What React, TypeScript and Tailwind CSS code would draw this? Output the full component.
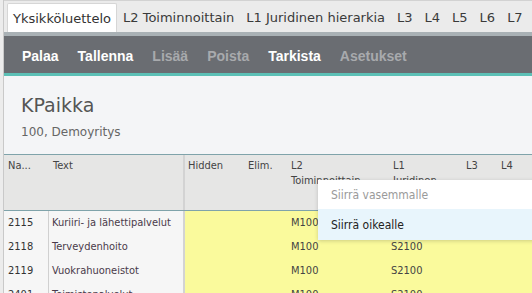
const tabs = ['L2 Toiminnoittain', 'L1 Juridinen hierarkia', 'L3', 'L4', 'L5', 'L6', 'L7'];

const actions = [
  { label: 'Palaa', enabled: true },
  { label: 'Tallenna', enabled: true },
  { label: 'Lisää', enabled: false },
  { label: 'Poista', enabled: false },
  { label: 'Tarkista', enabled: true },
  { label: 'Asetukset', enabled: false },
];

const rows = [
  { no: '2115', text: 'Kuriiri- ja lähettipalvelut', l2: 'M100', l1: 'S2100' },
  { no: '2118', text: 'Terveydenhoito', l2: 'M100', l1: 'S2100' },
  { no: '2119', text: 'Vuokrahuoneistot', l2: 'M100', l1: 'S2100' },
  { no: '2401', text: 'Toimistopalvelut', l2: 'M100', l1: 'S2100' },
];

export default function App() {
  return (
    <div className="relative flex h-[293px] w-[532px] overflow-hidden bg-white font-['Verdana','DejaVu_Sans',sans-serif] text-[#333]">
      {/* Left edge */}
      <div className="w-[4px] shrink-0 border-r border-[#c9c9c9] bg-[#ececec]" />

      <div className="flex min-w-0 flex-1 flex-col">
        {/* Tabs */}
        <div className="flex h-[32px] shrink-0 items-end border-t border-[#d2d2d2] bg-[#ebebeb] pl-[3px] text-[13px] whitespace-nowrap">
          <div className="flex h-[29px] items-center rounded-t-[2px] border border-b-0 border-[#d6d6d6] bg-white px-[5px] pt-[1px] text-[#333]">
            Yksikköluettelo
          </div>
          {tabs.map((t) => (
            <div key={t} className="flex h-[29px] items-center px-[6px] pt-[1px] text-[#3a3a3a]">
              {t}
            </div>
          ))}
        </div>
        <div className="h-[4px] shrink-0 bg-[#a9b1b5]" />

        {/* Toolbar */}
        <div className="flex h-[40px] shrink-0 items-center gap-[19px] border-b-[3px] border-[#5cc0b6] bg-[#6a6d72] pt-[3px] pl-[18px] font-['Liberation_Sans',sans-serif] text-[14px] font-bold">
          {actions.map((a) => (
            <span key={a.label} className={a.enabled ? 'text-white' : 'text-[#a8aaad]'}>
              {a.label}
            </span>
          ))}
        </div>

        {/* Page header */}
        <div className="h-[78px] shrink-0 bg-[#f4f5f7] px-[17px] pt-[16px]">
          <div className="text-[19px] leading-[26px] text-[#555]">KPaikka</div>
          <div className="mt-[5px] text-[12px] text-[#666]">100, Demoyritys</div>
        </div>

        {/* Grid header */}
        <div className="flex h-[57px] shrink-0 border-y border-[#7fa3aa] bg-[#e6e6e5] font-['DejaVu_Sans_Condensed','DejaVu_Sans',sans-serif] text-[11px] leading-[15px] text-[#444]">
          <div className="w-[45px] px-[4px] pt-[3px]">Na...</div>
          <div className="w-[136px] border-r-2 border-[#d3d3d3] px-[4px] pt-[3px]">Text</div>
          <div className="w-[59px] px-[3px] pt-[3px]">Hidden</div>
          <div className="w-[43px] px-[4px] pt-[3px]">Elim.</div>
          <div className="w-[102px] px-[4px] pt-[3px]">
            L2
            <br />
            Toiminnoittain
          </div>
          <div className="w-[73px] px-[4px] pt-[3px]">
            L1
            <br />
            Juridinen
          </div>
          <div className="w-[35px] px-[4px] pt-[3px]">L3</div>
          <div className="w-[35px] px-[4px] pt-[3px]">L4</div>
        </div>

        {/* Rows */}
        <div className="flex flex-col font-['DejaVu_Sans_Condensed','DejaVu_Sans',sans-serif] text-[11px]">
          {rows.map((r) => (
            <div key={r.no} className="flex h-[24px] shrink-0 items-center">
              <div className="flex h-full w-[45px] items-center border-r border-[#d0d0d0] bg-[#f6f6f6] px-[4px] text-[#333]">
                {r.no}
              </div>
              <div className="flex h-full w-[136px] items-center border-r-2 border-[#d3d3d3] bg-[#f6f6f6] px-[3px] whitespace-nowrap text-[#4a3a4a]">
                {r.text}
              </div>
              <div className="flex h-full flex-1 items-center bg-[#fafa9c] text-[#444]">
                <div className="w-[102px] shrink-0" />
                <div className="w-[102px] shrink-0 px-[4px]">{r.l2}</div>
                <div className="w-[73px] shrink-0 px-[2px]">{r.l1}</div>
              </div>
            </div>
          ))}
        </div>
      </div>

      {/* Context menu */}
      <div className="absolute top-[180px] left-[318px] w-[220px] bg-white font-['DejaVu_Sans_Condensed','DejaVu_Sans',sans-serif] text-[12px] shadow-[0_1px_4px_rgba(0,0,0,0.18)]">
        <div className="flex h-[29px] items-center px-[13px] text-[#9a9a9a]">Siirrä vasemmalle</div>
        <div className="flex h-[31px] items-center bg-[#e8f5fc] px-[13px] text-[#222]">Siirrä oikealle</div>
      </div>
    </div>
  );
}
